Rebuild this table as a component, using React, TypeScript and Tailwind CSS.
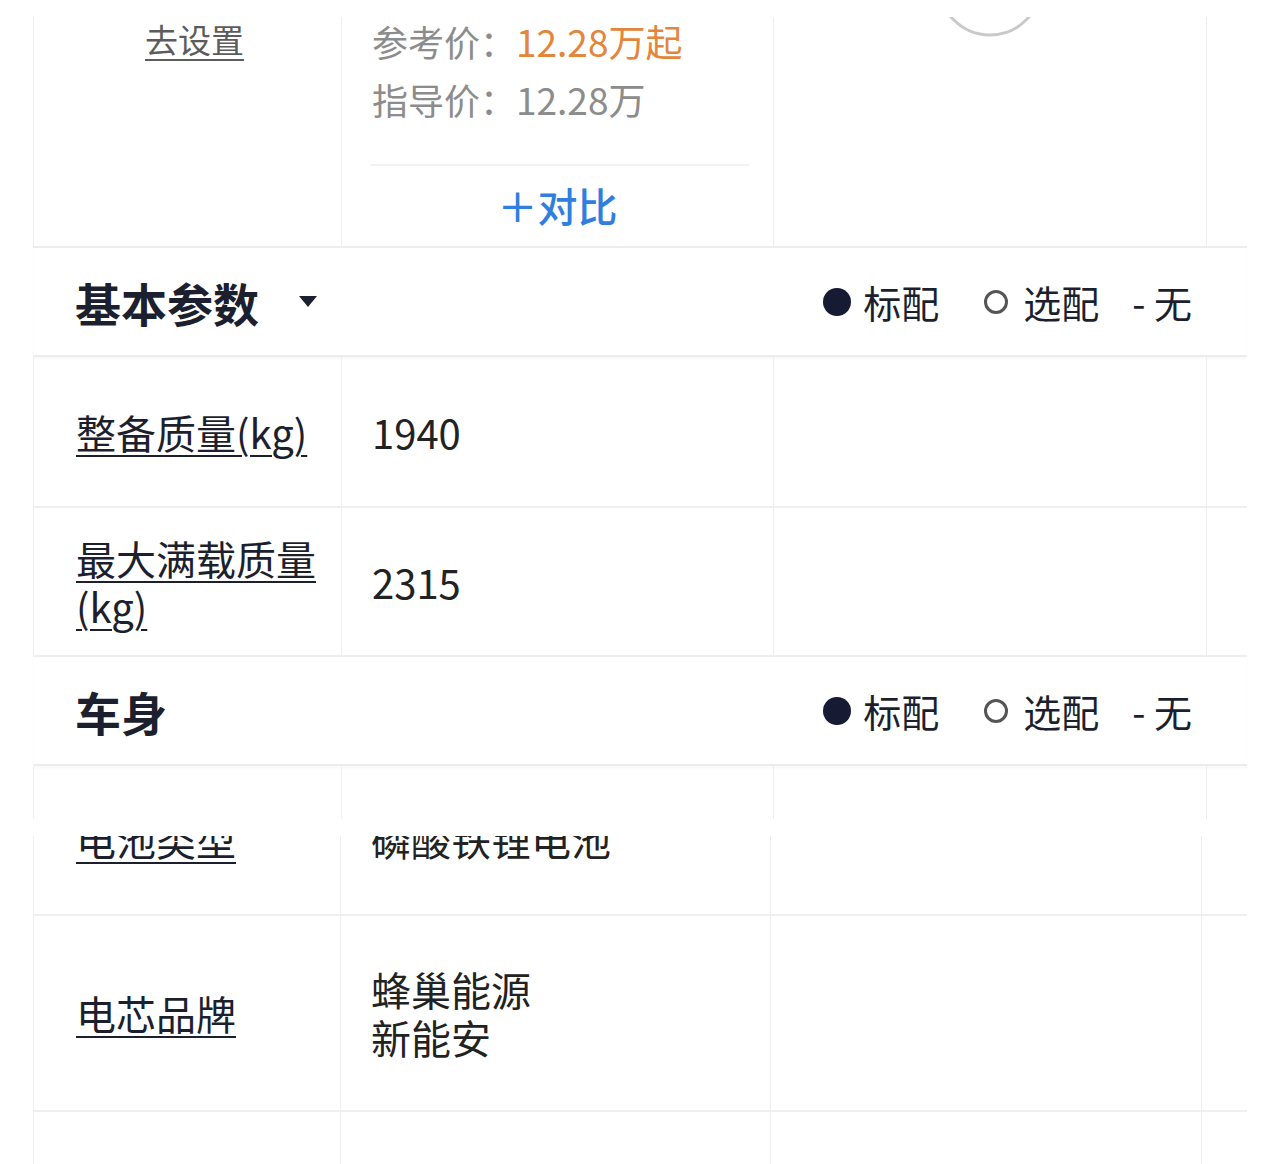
import React from "react";

function Legend() {
  return (
    <div className="flex items-center text-[38px] leading-none text-[#1c1f2e]">
      <span className="w-[28px] h-[28px] rounded-full bg-[#161a33]" />
      <span className="ml-[12px]">标配</span>
      <span className="ml-[45px] w-[24px] h-[24px] rounded-full border-[3px] border-[#555]" />
      <span className="ml-[15px]">选配</span>
      <span className="ml-[33px]">- 无</span>
    </div>
  );
}

function Header({ title, arrow }: { title: string; arrow?: boolean }) {
  return (
    <div className="h-[109px] flex items-center justify-between pl-[42px] pr-[55px] border-b-2 border-[#ececec] shadow-[0_2px_3px_rgba(0,0,0,0.03)]">
      <div className="flex items-center">
        <span className="text-[46px] font-semibold leading-none text-[#1c1f2e]">{title}</span>
        {arrow && (
          <svg className="ml-[40px]" width="18" height="12" viewBox="0 0 18 12">
            <path d="M0 0H18L9 11Z" fill="#1c1f2e" />
          </svg>
        )}
      </div>
      <Legend />
    </div>
  );
}

const label =
  "text-[40px] leading-[48px] text-[#1c1f2e] underline decoration-[2px] underline-offset-[6px] decoration-[#1c1f2e]";
const value = "text-[40px] leading-[48px] text-[#222]";

export default function App() {
  return (
    <div className="w-[1280px] h-[1164px] bg-white overflow-hidden font-['Noto_Sans_CJK_SC','Noto_Sans',sans-serif]">
      <div className="ml-[33px] w-[1214px] pt-[17px]">
        {/* top row */}
        <div className="grid grid-cols-[309px_432px_433px_40px] h-[231px] border-b-2 border-[#ededed]">
          <div className="border-l border-r border-[#efefef] flex justify-center pl-[14px] pt-[2px]">
            <span className="text-[33px] leading-[40px] text-[#5c5c5c] underline decoration-[2px] underline-offset-[6px]">
              去设置
            </span>
          </div>
          <div className="border-r border-[#ededed] flex flex-col">
            <div className="pl-[30px] -mt-[5px] text-[36px] leading-[58px] text-[#8c8c8c]">
              <div>
                参考价：<span className="text-[37px] text-[#e3853a]">12.28万起</span>
              </div>
              <div>
                指导价：<span className="text-[37px]">12.28万</span>
              </div>
            </div>
            <div className="mt-[36px] ml-[28px] mr-[24px] h-[2px] bg-[#f3f3f3]" />
            <div className="pt-[15px] flex justify-center text-[40px] leading-[48px] font-medium text-[#2f7ee0]">
              ＋对比
            </div>
          </div>
          <div className="border-r border-[#ededed] flex justify-center items-start">
            <svg width="110" height="20" viewBox="0 0 110 20">
              <circle cx="55" cy="-33" r="51" fill="none" stroke="#c9c9c9" strokeWidth="3" />
            </svg>
          </div>
          <div />
        </div>

        <Header title="基本参数" arrow />

        <div className="grid grid-cols-[309px_432px_433px_40px] h-[151px] border-b-2 border-[#efefef]">
          <div className="border-l border-r border-[#efefef] flex items-center pl-[42px]">
            <span className={label}>整备质量(kg)</span>
          </div>
          <div className="border-r border-[#ededed] flex items-center pl-[30px]">
            <span className={value}>1940</span>
          </div>
          <div className="border-r border-[#ededed]" />
          <div />
        </div>

        <div className="grid grid-cols-[309px_432px_433px_40px] h-[149px] border-b-2 border-[#efefef]">
          <div className="border-l border-r border-[#efefef] flex items-center pl-[42px]">
            <span className={label}>
              最大满载质量
              <br />
              (kg)
            </span>
          </div>
          <div className="border-r border-[#ededed] flex items-center pl-[30px]">
            <span className={value}>2315</span>
          </div>
          <div className="border-r border-[#ededed]" />
          <div />
        </div>

        <Header title="车身" />

        {/* stitched row */}
        <div className="grid grid-cols-[309px_432px_433px_40px] h-[53px]">
          <div className="border-l border-r border-[#f0f0f0]" />
          <div className="border-r border-[#ededed]" />
          <div className="border-r border-[#ededed]" />
          <div />
        </div>
        <div className="h-[17px]" />
      </div>

      <div className="ml-[33px] w-[1214px]">
        <div className="grid grid-cols-[308px_430px_431px_45px] h-[80px] border-b-2 border-[#efefef] overflow-hidden">
          <div className="border-l border-r border-[#f0f0f0] pl-[42px] overflow-hidden">
            <div className="-mt-[21px]">
              <span className={label}>电池类型</span>
            </div>
          </div>
          <div className="border-r border-[#ededed] pl-[30px] overflow-hidden">
            <div className="-mt-[21px]">
              <span className={value}>磷酸铁锂电池</span>
            </div>
          </div>
          <div className="border-r border-[#ededed]" />
          <div />
        </div>

        <div className="grid grid-cols-[308px_430px_431px_45px] h-[196px] border-b-2 border-[#efefef]">
          <div className="border-l border-r border-[#f0f0f0] flex items-center pl-[42px]">
            <span className={label}>电芯品牌</span>
          </div>
          <div className="border-r border-[#ededed] flex items-center pl-[30px]">
            <span className={value}>
              蜂巢能源
              <br />
              新能安
            </span>
          </div>
          <div className="border-r border-[#ededed]" />
          <div />
        </div>

        <div className="grid grid-cols-[308px_430px_431px_45px] h-[60px]">
          <div className="border-l border-r border-[#f0f0f0]" />
          <div className="border-r border-[#ededed]" />
          <div className="border-r border-[#ededed]" />
          <div />
        </div>
      </div>
    </div>
  );
}
